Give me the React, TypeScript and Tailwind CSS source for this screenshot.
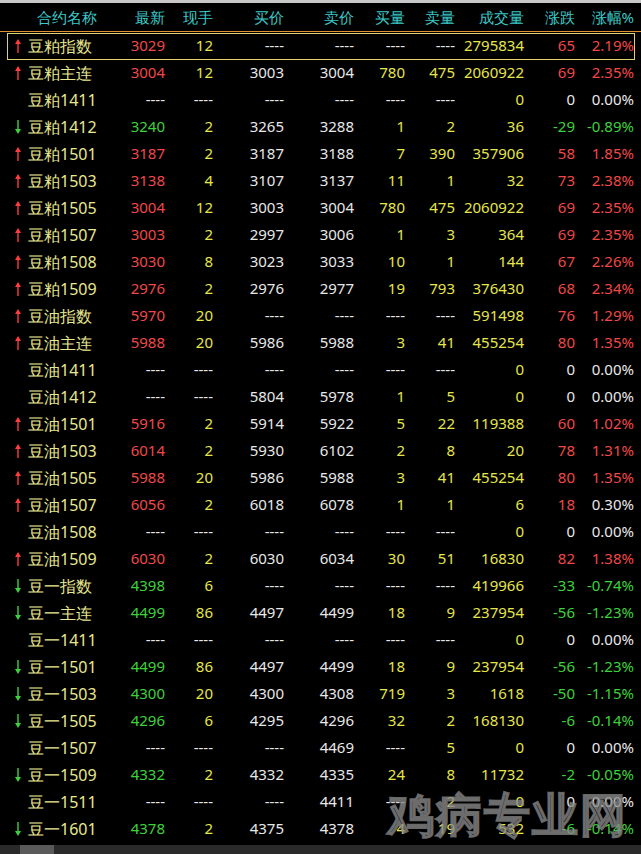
type Dir = "up" | "down" | "none";
type Row = [Dir, string, ...string[]];

const rows: Row[] = [
  ["up", "豆粕指数", "3029", "12", "----", "----", "----", "----", "2795834", "65", "2.19%"],
  ["up", "豆粕主连", "3004", "12", "3003", "3004", "780", "475", "2060922", "69", "2.35%"],
  ["none", "豆粕1411", "----", "----", "----", "----", "----", "----", "0", "0", "0.00%"],
  ["down", "豆粕1412", "3240", "2", "3265", "3288", "1", "2", "36", "-29", "-0.89%"],
  ["up", "豆粕1501", "3187", "2", "3187", "3188", "7", "390", "357906", "58", "1.85%"],
  ["up", "豆粕1503", "3138", "4", "3107", "3137", "11", "1", "32", "73", "2.38%"],
  ["up", "豆粕1505", "3004", "12", "3003", "3004", "780", "475", "2060922", "69", "2.35%"],
  ["up", "豆粕1507", "3003", "2", "2997", "3006", "1", "3", "364", "69", "2.35%"],
  ["up", "豆粕1508", "3030", "8", "3023", "3033", "10", "1", "144", "67", "2.26%"],
  ["up", "豆粕1509", "2976", "2", "2976", "2977", "19", "793", "376430", "68", "2.34%"],
  ["up", "豆油指数", "5970", "20", "----", "----", "----", "----", "591498", "76", "1.29%"],
  ["up", "豆油主连", "5988", "20", "5986", "5988", "3", "41", "455254", "80", "1.35%"],
  ["none", "豆油1411", "----", "----", "----", "----", "----", "----", "0", "0", "0.00%"],
  ["none", "豆油1412", "----", "----", "5804", "5978", "1", "5", "0", "0", "0.00%"],
  ["up", "豆油1501", "5916", "2", "5914", "5922", "5", "22", "119388", "60", "1.02%"],
  ["up", "豆油1503", "6014", "2", "5930", "6102", "2", "8", "20", "78", "1.31%"],
  ["up", "豆油1505", "5988", "20", "5986", "5988", "3", "41", "455254", "80", "1.35%"],
  ["up", "豆油1507", "6056", "2", "6018", "6078", "1", "1", "6", "18", "0.30%"],
  ["none", "豆油1508", "----", "----", "----", "----", "----", "----", "0", "0", "0.00%"],
  ["up", "豆油1509", "6030", "2", "6030", "6034", "30", "51", "16830", "82", "1.38%"],
  ["down", "豆一指数", "4398", "6", "----", "----", "----", "----", "419966", "-33", "-0.74%"],
  ["down", "豆一主连", "4499", "86", "4497", "4499", "18", "9", "237954", "-56", "-1.23%"],
  ["none", "豆一1411", "----", "----", "----", "----", "----", "----", "0", "0", "0.00%"],
  ["down", "豆一1501", "4499", "86", "4497", "4499", "18", "9", "237954", "-56", "-1.23%"],
  ["down", "豆一1503", "4300", "20", "4300", "4308", "719", "3", "1618", "-50", "-1.15%"],
  ["down", "豆一1505", "4296", "6", "4295", "4296", "32", "2", "168130", "-6", "-0.14%"],
  ["none", "豆一1507", "----", "----", "----", "4469", "----", "5", "0", "0", "0.00%"],
  ["down", "豆一1509", "4332", "2", "4332", "4335", "24", "8", "11732", "-2", "-0.05%"],
  ["none", "豆一1511", "----", "----", "----", "4411", "----", "2", "0", "0", "0.00%"],
  ["down", "豆一1601", "4378", "2", "4375", "4378", "4", "19", "532", "-6", "-0.14%"],
];

const headers = ["最新", "现手", "买价", "卖价", "买量", "卖量", "成交量", "涨跌", "涨幅%"];
const grid = "grid grid-cols-[28px_82px_55px_48px_71px_70px_51px_50px_69px_51px_59px_7px]";

const Arrow = ({ dir }: { dir: Dir }) => {
  if (dir === "none") return null;
  const c = dir === "up" ? "#ff3c3c" : "#3cd23c";
  return (
    <svg width="8" height="16" viewBox="0 0 8 16" className="ml-[14px]">
      {dir === "up" ? (
        <>
          <path d="M4 1 L1 6 L7 6 Z" fill={c} />
          <line x1="4" y1="5" x2="4" y2="15" stroke={c} strokeWidth="1.4" />
        </>
      ) : (
        <>
          <path d="M4 15 L1 10 L7 10 Z" fill={c} />
          <line x1="4" y1="1" x2="4" y2="11" stroke={c} strokeWidth="1.4" />
        </>
      )}
    </svg>
  );
};

const cellColor = (dir: Dir, col: number, v: string) => {
  if (v === "----") return "text-[#e8e8e8]";
  const dc = dir === "up" ? "text-[#f04848]" : dir === "down" ? "text-[#3cd23c]" : "text-[#e8e8e8]";
  if (col === 0) return dc;
  if (col === 2 || col === 3) return "text-[#e8e8e8]";
  if (col === 7 || col === 8) return v.startsWith("0") ? "text-[#e8e8e8]" : dc;
  return "text-[#e6e64a]";
};

export default function App() {
  return (
    <div className="relative w-[641px] h-[854px] bg-black overflow-hidden font-['Noto_Sans','Noto_Sans_CJK_SC',sans-serif] text-[15px] leading-none">
      <div className="h-[3px] bg-[#c8c8c8]" />
      <div className={`${grid} h-[29px] items-center text-[#3cc8c8] border-b border-[#e09030]`}>
        <div />
        <div className="pl-[9px]">合约名称</div>
        {headers.map((h) => (
          <div key={h} className="text-right">{h}</div>
        ))}
        <div />
      </div>
      <div className="flex flex-col">
        {rows.map(([dir, name, ...vals], i) => (
          <div key={i} className={`${grid} h-[27px] items-center`}>
            <div><Arrow dir={dir} /></div>
            <div className="text-[#e8e890] text-[16px]">{name}</div>
            {vals.map((v, c) => (
              <div key={c} className={`text-right ${cellColor(dir, c, v)}`}>{v}</div>
            ))}
            <div />
          </div>
        ))}
      </div>
      {/* selected row frame */}
      <div className="absolute left-[7px] top-[33px] w-[628px] h-[27px] border border-[#e0d070] pointer-events-none" />
      <div className="absolute left-0 right-0 bottom-0 h-[9px] bg-[#2a2a2a]">
        <div className="ml-[20px] w-[34px] h-full bg-[#5a5a5a]" />
      </div>
      <div className="absolute left-[388px] top-[790px] text-[46px] font-bold tracking-[2px] text-[rgba(60,60,60,0.35)] [-webkit-text-stroke:1.5px_rgba(150,150,150,0.7)] font-['Noto_Sans_CJK_SC',sans-serif] pointer-events-none">
        鸡病专业网
      </div>
    </div>
  );
}
